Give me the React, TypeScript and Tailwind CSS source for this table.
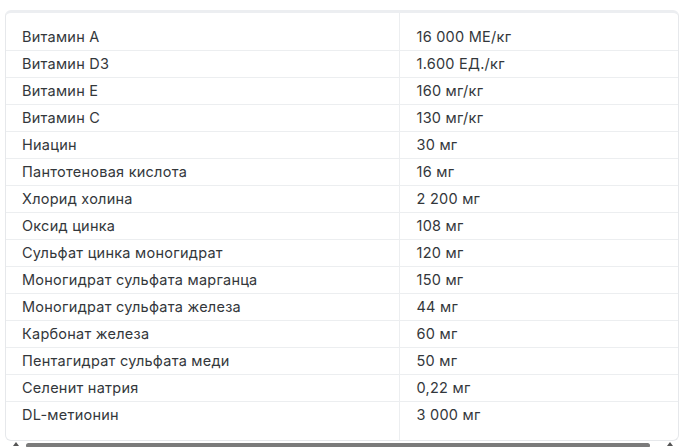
const rows: [string, string][] = [
  ["Витамин A", "16 000 МЕ/кг"],
  ["Витамин D3", "1.600 ЕД./кг"],
  ["Витамин E", "160 мг/кг"],
  ["Витамин C", "130 мг/кг"],
  ["Ниацин", "30 мг"],
  ["Пантотеновая кислота", "16 мг"],
  ["Хлорид холина", "2 200 мг"],
  ["Оксид цинка", "108 мг"],
  ["Сульфат цинка моногидрат", "120 мг"],
  ["Моногидрат сульфата марганца", "150 мг"],
  ["Моногидрат сульфата железа", "44 мг"],
  ["Карбонат железа", "60 мг"],
  ["Пентагидрат сульфата меди", "50 мг"],
  ["Селенит натрия", "0,22 мг"],
  ["DL-метионин", "3 000 мг"],
];

const App = () => {
  return (
    <div className="w-[686px] h-[447px] bg-white overflow-hidden font-['Inter','Noto_Sans',sans-serif] text-[14.5px] tracking-[0.25px] text-[#33373b]">
      <div className="pt-[10px] pl-[5px] pr-[7px]">
        <div className="border border-[#e6e8eb] border-t-[3px] border-t-[#eceef1] rounded-[6px] overflow-hidden">
          <table className="w-full border-collapse">
            <tbody>
              {rows.map(([name, value], i) => {
                const first = i === 0;
                const last = i === rows.length - 1;
                return (
                  <tr key={name} className={last ? "" : "border-b border-[#eceef0]"}>
                    <td
                      className={`w-[393px] pl-[16px] border-r border-[#eceef0] leading-[26px] ${
                        first ? "pt-[11px]" : ""
                      } ${last ? "pb-[12px]" : ""}`}
                    >
                      {name}
                    </td>
                    <td
                      className={`pl-[17px] leading-[26px] ${first ? "pt-[11px]" : ""} ${
                        last ? "pb-[12px]" : ""
                      }`}
                    >
                      {value}
                    </td>
                  </tr>
                );
              })}
            </tbody>
          </table>
        </div>
      </div>
      <div className="flex items-end gap-[7px] h-[6px] mt-[1px] px-[13px]">
        <span className="self-start w-0 h-0 border-l-[3px] border-r-[3px] border-b-[4px] border-l-transparent border-r-transparent border-b-[#555]" />
        <div className="flex-1 h-[5px] rounded-full bg-[#7b7b7b]" />
        <span className="self-start ml-[10px] w-0 h-0 border-l-[3px] border-r-[3px] border-b-[4px] border-l-transparent border-r-transparent border-b-[#555]" />
      </div>
    </div>
  );
};

export default App;
